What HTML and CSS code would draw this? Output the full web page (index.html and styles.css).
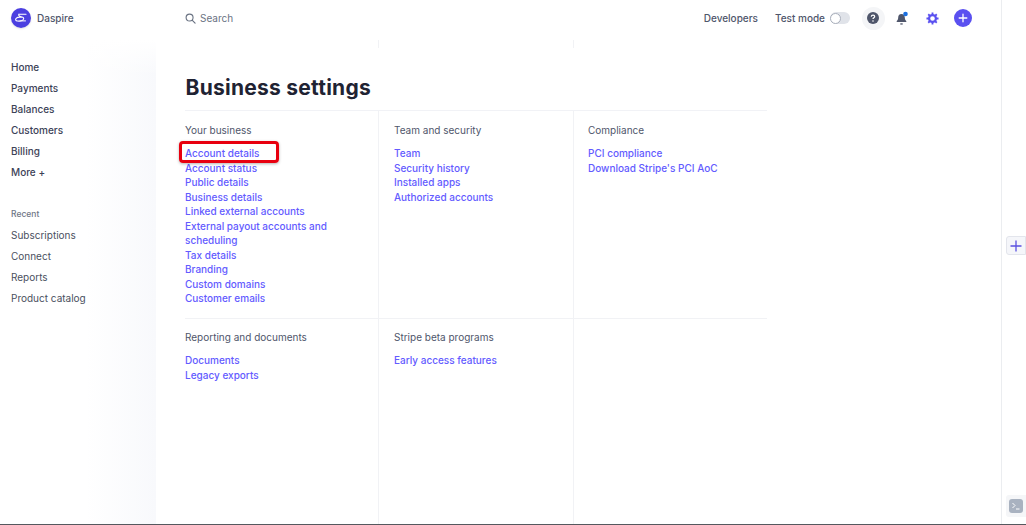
FILE: index.html
```html
<!DOCTYPE html>
<html lang="en">
<head>
<meta charset="utf-8">
<title>Business settings</title>
<link rel="stylesheet" href="styles.css">
</head>
<body>
<div class="shell">
  <div class="main">
    <header class="topbar">
      <div class="brand">
        <span class="logo"><svg viewBox="0 0 20 20" width="20" height="20"><circle cx="10" cy="10" r="10" fill="#4b3fe0"/><path d="M8 6.200h7M8 6.200c-1.200 1.600 1 2.300 3 2.800 1.800.5 2.200 1.600 1 2.800-1.300 1.200-3.600 1.500-5.600 1.200-1.800-.3-2.300-1.600-1.200-2.700 1.100-1.100 3.400-1.400 5.400-1" fill="none" stroke="#fff" stroke-width="1.100" stroke-linecap="round"/><path d="M9 12.900h5.500" stroke="#fff" stroke-width="1" stroke-linecap="round"/></svg></span>
        <span class="brand-name">Daspire</span>
      </div>
      <div class="search">
        <svg viewBox="0 0 12 12" width="11" height="11"><circle cx="5" cy="5" r="3.800" fill="none" stroke="#6a7383" stroke-width="1.200"/><path d="M8 8l3 3" stroke="#6a7383" stroke-width="1.300" stroke-linecap="round"/></svg>
        <span>Search</span>
      </div>
      <div class="actions">
        <span class="developers">Developers</span>
        <span class="test-mode">Test mode</span>
        <span class="toggle"><span class="knob"></span></span>
        <span class="help"><svg viewBox="0 0 12 12" width="12" height="12"><circle cx="6" cy="6" r="6" fill="#4f566b"/><path d="M4.300 4.700c0-1 .8-1.600 1.700-1.600s1.700.6 1.700 1.500c0 1.200-1.700 1.300-1.700 2.500" fill="none" stroke="#fff" stroke-width="1.200"/><circle cx="6" cy="9" r=".8" fill="#fff"/></svg></span>
        <span class="bell"><svg viewBox="0 0 14 15" width="14" height="15"><path d="M6.500 3c-2.300 0-3.300 1.600-3.300 3.500 0 2-.8 3-1.500 3.600v.9h9.600v-.9c-.7-.6-1.500-1.600-1.500-3.600C9.800 4.600 8.800 3 6.500 3z" fill="#4f566b"/><path d="M5.300 12.300h2.400v1.300H5.300z" fill="#4f566b"/><circle cx="10.500" cy="3" r="2.300" fill="#1a6fe0"/></svg></span>
        <span class="gear"><svg viewBox="0 0 14 14" width="13" height="13"><circle cx="7" cy="7" r="3.700" fill="none" stroke="#5a50f0" stroke-width="2.400"/><path d="M7 .5v2.500M7 11v2.500M.5 7H3M11 7h2.500M2.400 2.400l1.800 1.800M9.800 9.800l1.800 1.800M2.400 11.600l1.800-1.800M9.800 4.200l1.800-1.800" stroke="#5a50f0" stroke-width="2"/></svg></span>
        <span class="add"><svg viewBox="0 0 18 18" width="18" height="18"><circle cx="9" cy="9" r="9" fill="#5a50f0"/><path d="M9 5.200v7.600M5.200 9h7.600" stroke="#fff" stroke-width="1.300" stroke-linecap="round"/></svg></span>
      </div>
    </header>
    <div class="body">
      <nav class="sidebar">
        <ul class="nav primary">
          <li>Home</li>
          <li>Payments</li>
          <li>Balances</li>
          <li>Customers</li>
          <li>Billing</li>
          <li>More +</li>
        </ul>
        <div class="recent-label">Recent</div>
        <ul class="nav recent">
          <li>Subscriptions</li>
          <li>Connect</li>
          <li>Reports</li>
          <li>Product catalog</li>
        </ul>
      </nav>
      <main class="content">
        <div class="ticks"><span></span><span></span><span></span></div>
        <h1 class="title">Business settings</h1>
        <div class="grid">
          <section class="cell">
            <h2>Your business</h2>
            <ul class="links">
              <li class="marked"><a href="#">Account details</a><span class="highlight"></span></li>
              <li><a href="#">Account status</a></li>
              <li><a href="#">Public details</a></li>
              <li><a href="#">Business details</a></li>
              <li><a href="#">Linked external accounts</a></li>
              <li><a href="#">External payout accounts and scheduling</a></li>
              <li><a href="#">Tax details</a></li>
              <li><a href="#">Branding</a></li>
              <li><a href="#">Custom domains</a></li>
              <li><a href="#">Customer emails</a></li>
            </ul>
          </section>
          <section class="cell">
            <h2>Team and security</h2>
            <ul class="links">
              <li><a href="#">Team</a></li>
              <li><a href="#">Security history</a></li>
              <li><a href="#">Installed apps</a></li>
              <li><a href="#">Authorized accounts</a></li>
            </ul>
          </section>
          <section class="cell narrow">
            <h2>Compliance</h2>
            <ul class="links">
              <li><a href="#">PCI compliance</a></li>
              <li><a href="#">Download Stripe's PCI AoC</a></li>
            </ul>
          </section>
          <section class="cell lower">
            <h2>Reporting and documents</h2>
            <ul class="links">
              <li><a href="#">Documents</a></li>
              <li><a href="#">Legacy exports</a></li>
            </ul>
          </section>
          <section class="cell lower">
            <h2>Stripe beta programs</h2>
            <ul class="links">
              <li><a href="#">Early access features</a></li>
            </ul>
          </section>
          <section class="cell lower"></section>
        </div>
      </main>
    </div>
  </div>
  <aside class="rail">
    <span class="rail-add"><svg viewBox="0 0 12 12" width="12" height="12"><path d="M6 .5v11M.5 6h11" stroke="#5a50e0" stroke-width="1.300"/></svg></span>
    <span class="rail-term"><svg viewBox="0 0 14 14" width="14" height="14"><rect width="14" height="14" rx="3" fill="#a9b2c0"/><path d="M3.500 4l2.500 2.500L3.500 9M7 10h3.500" fill="none" stroke="#fff" stroke-width="1"/></svg></span>
  </aside>
</div>
</body>
</html>
```

FILE: styles.css
```css
* {
  box-sizing: border-box;
}

html,
body {
  margin: 0;
  padding: 0;
  height: 100%;
  overflow: hidden;
  background: #fff;
}

body {
  font-family: Inter, "Liberation Sans", sans-serif;
  font-size: 10px;
  color: #3c4257;
}

ul {
  list-style: none;
  margin: 0;
  padding: 0;
}

.shell {
  display: flex;
  height: 525px;
  border-bottom: 1px solid #55585e;
}

.main {
  width: 1002px;
  flex: none;
  display: flex;
  flex-direction: column;
  border-right: 1px solid #ebedf0;
}

.topbar {
  height: 36px;
  flex: none;
  display: flex;
  align-items: center;
  padding-left: 11px;
  padding-right: 29px;
}

.brand {
  width: 174px;
  display: flex;
  align-items: center;
  gap: 6px;
}

.logo {
  display: flex;
  border-radius: 50%;
  box-shadow: 0 1px 2px rgba(0, 0, 0, 0.12);
}

.brand-name {
  font-weight: 500;
  color: #4f566b;
}

.search {
  display: flex;
  align-items: center;
  gap: 4px;
  color: #6a7383;
  flex: 1;
}

.actions {
  display: flex;
  align-items: center;
}

.developers,
.test-mode {
  font-weight: 500;
  color: #4f566b;
}

.developers {
  margin-right: 17px;
}

.test-mode {
  margin-right: 5px;
}

.toggle {
  width: 20px;
  height: 12px;
  border-radius: 6px;
  background: #e0e3e9;
  display: flex;
  align-items: center;
  margin-right: 11.500px;
}

.knob {
  width: 11px;
  height: 11px;
  border-radius: 50%;
  background: #fff;
  border: 1px solid #a9afbb;
}

.help {
  width: 23px;
  height: 23px;
  border-radius: 50%;
  background: #f4f5f7;
  display: flex;
  align-items: center;
  justify-content: center;
  margin-right: 10.500px;
}

.bell {
  display: flex;
  margin-right: 16.500px;
}

.gear {
  display: flex;
  margin-right: 15.500px;
}

.add {
  display: flex;
}

.body {
  flex: 1;
  display: flex;
  min-height: 0;
}

.sidebar {
  width: 156px;
  flex: none;
  padding: 21px 0 0 11px;
  background:
    linear-gradient(180deg, #fff 4px, rgba(255, 255, 255, 0) 40px),
    linear-gradient(90deg, #fff 55%, #f8f9fc 100%);
}

.nav li {
  height: 21px;
  line-height: 21px;
}

.primary li {
  font-weight: 500;
  color: #3c4257;
}

.recent-label {
  margin-top: 21px;
  height: 20.500px;
  line-height: 20px;
  font-size: 8.500px;
  font-weight: 500;
  color: #6f7686;
}

.recent li {
  color: #4a5060;
}

.content {
  flex: 1;
  padding-left: 29px;
  padding-right: 234px;
  display: flex;
  flex-direction: column;
  min-width: 0;
}

.ticks {
  display: grid;
  grid-template-columns: 193px 195px 194px;
  height: 8px;
  margin-top: 4px;
  flex: none;
}

.ticks span {
  border-left: 1px solid #f1f2f5;
}

.ticks span:first-child {
  border-left: 0;
}

.title {
  flex: none;
  margin: 0;
  padding-top: 25px;
  padding-left: 0.500px;
  height: 62px;
  font-size: 21px;
  line-height: 30px;
  font-weight: 700;
  letter-spacing: 0.25px;
  color: #1f2333;
}

.grid {
  flex: 1;
  display: grid;
  grid-template-columns: 193px 195px 194px;
  grid-template-rows: 207px 1fr;
  border-top: 1px solid #f1f2f6;
}

.cell {
  padding: 12px 12px 0 15px;
  border-left: 1px solid #f1f2f5;
}

.cell:nth-child(3n + 1) {
  padding-left: 0;
  border-left: 0;
}

.narrow {
  padding-left: 14px;
}

.lower {
  padding-top: 11px;
  border-top: 1px solid #f1f2f5;
}

.cell h2 {
  margin: 0 0 8.500px;
  font-size: 10px;
  line-height: 14.500px;
  font-weight: 400;
  color: #4f566b;
}

.links li {
  line-height: 14.500px;
}

.links a {
  color: #635bff;
  font-weight: 500;
  text-decoration: none;
}

.marked {
  position: relative;
}

.highlight {
  position: absolute;
  left: -6px;
  top: -5.500px;
  width: 100px;
  height: 22.500px;
  border: 3px solid #e8000f;
  border-radius: 4px;
  box-shadow: 0 1px 3px rgba(0, 0, 0, 0.3);
}

.rail {
  flex: 1;
  display: flex;
  flex-direction: column;
  align-items: flex-end;
  padding-top: 236px;
}

.rail-add {
  width: 20px;
  height: 19px;
  display: flex;
  align-items: center;
  justify-content: center;
  background: #f5f6fa;
  border: 1px solid #e3e5ec;
  border-radius: 3px 0 0 3px;
}

.rail-term {
  width: 20px;
  height: 22px;
  margin-top: 240px;
  display: flex;
  align-items: center;
  justify-content: center;
  background: #f5f6f8;
  border-radius: 3px 0 0 3px;
}
```
